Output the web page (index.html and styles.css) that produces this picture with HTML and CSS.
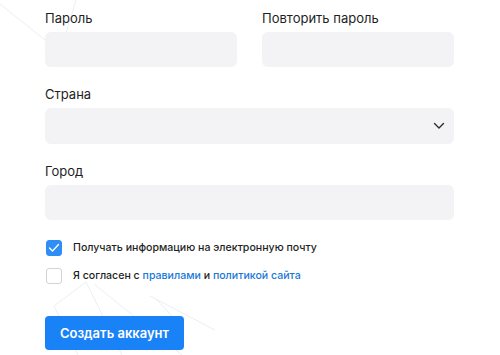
FILE: index.html
```html
<!DOCTYPE html>
<html lang="ru">
<head>
<meta charset="utf-8">
<link rel="stylesheet" href="styles.css">
</head>
<body>
<div class="page">
  <svg class="deco" width="500" height="355" viewBox="0 0 500 355" aria-hidden="true">
    <g fill="none" stroke="#e9eff6" stroke-width="1">
      <line x1="0" y1="4" x2="45" y2="40"/>
      <line x1="76" y1="0" x2="64" y2="40"/>
      <line x1="86" y1="282" x2="54" y2="306"/>
      <line x1="86" y1="282" x2="122" y2="355"/>
      <line x1="54" y1="306" x2="78" y2="355"/>
      <line x1="94" y1="284" x2="182" y2="355"/>
      <line x1="150" y1="296" x2="215" y2="330"/>
      <line x1="157" y1="300" x2="172" y2="316"/>
    </g>
  </svg>
  <form class="form">
    <div class="row two">
      <div class="field">
        <label class="label">Пароль</label>
        <div class="input"></div>
      </div>
      <div class="field">
        <label class="label">Повторить пароль</label>
        <div class="input"></div>
      </div>
    </div>
    <div class="field">
      <label class="label">Страна</label>
      <div class="input select">
        <svg class="chev" width="12" height="8" viewBox="0 0 12 8"><path d="M1.5 1.5 L6 6 L10.5 1.5" fill="none" stroke="#2a2a33" stroke-width="1.4" stroke-linecap="round" stroke-linejoin="round"/></svg>
      </div>
    </div>
    <div class="field">
      <label class="label">Город</label>
      <div class="input"></div>
    </div>
    <div class="checks">
      <div class="check">
        <span class="box on"><svg width="12" height="10" viewBox="0 0 12 10"><path d="M1.5 5 L4.5 8 L10.5 1.5" fill="none" stroke="#fff" stroke-width="1.3" stroke-linecap="round" stroke-linejoin="round"/></svg></span>
        <span class="ctext">Получать информацию на электронную почту</span>
      </div>
      <div class="check">
        <span class="box"></span>
        <span class="ctext">Я согласен с <a class="link">правилами</a> и <a class="link">политикой сайта</a></span>
      </div>
    </div>
    <button type="button" class="btn">Создать аккаунт</button>
  </form>
</div>
</body>
</html>
```

FILE: styles.css
```css
html, body {
  margin: 0;
  padding: 0;
  background: #ffffff;
}
.page {
  position: relative;
  width: 500px;
  height: 355px;
  overflow: hidden;
  font-family: Inter, "Noto Sans", sans-serif;
  color: #1e1f24;
}
.deco {
  position: absolute;
  left: 0;
  top: 0;
  z-index: 0;
}
.form {
  position: relative;
  z-index: 1;
  width: 409px;
  padding: 9px 0 0 45px;
  display: flex;
  flex-direction: column;
  gap: 18px;
}
.row.two {
  display: grid;
  grid-template-columns: 192px 192px;
  column-gap: 25px;
}
.field {
  display: flex;
  flex-direction: column;
  gap: 5px;
}
.label {
  font-size: 13px;
  line-height: 18px;
  color: #1e1f24;
}
.input {
  height: 35px;
  border-radius: 6px;
  background: #f3f2f4;
}
.select {
  display: flex;
  align-items: center;
  justify-content: flex-end;
  padding-right: 9px;
  box-sizing: border-box;
  height: 36px;
}
.chev {
  display: block;
}
.checks {
  display: flex;
  flex-direction: column;
  gap: 12px;
  margin-top: 2px;
}
.check {
  display: flex;
  align-items: center;
  gap: 11px;
  padding-left: 1px;
}
.box {
  width: 16px;
  height: 16px;
  box-sizing: border-box;
  border: 1px solid #d3d3d8;
  border-radius: 3px;
  background: #fff;
  display: flex;
  align-items: center;
  justify-content: center;
}
.box.on {
  background: #2f8ef5;
  border-color: #2f8ef5;
}
.ctext {
  font-size: 10.6px;
  font-weight: 500;
  line-height: 16px;
  color: #1e1f24;
}
.link {
  color: #1a78d8;
}
.btn {
  margin-top: 14px;
  width: 139px;
  height: 34px;
  border: none;
  border-radius: 4px;
  background: #1a82f7;
  color: #fff;
  font-family: Inter, "Noto Sans", sans-serif;
  font-size: 13px;
  font-weight: 600;
  padding: 0;
  cursor: pointer;
}
```
